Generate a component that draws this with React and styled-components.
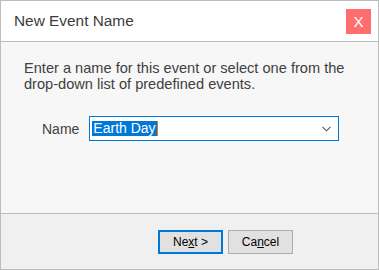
import styled, { createGlobalStyle } from 'styled-components';

const GlobalStyle = createGlobalStyle`
    html, body {
        margin: 0;
        padding: 0;
        background: #ffffff;
    }
    body {
        font-family: "Liberation Sans", Arial, sans-serif;
    }
`;

const App = () => {
    return (
        <>
            <GlobalStyle />
            <Styled.Dialog>
                <Styled.Header>
                    <Styled.Title>New Event Name</Styled.Title>
                    <Styled.CloseButton>X</Styled.CloseButton>
                </Styled.Header>
                <Styled.Body>
                    <Styled.Message>
                        Enter a name for this event or select one from the
                        <br />
                        drop-down list of predefined events.
                    </Styled.Message>
                    <Styled.FieldRow>
                        <Styled.Label>Name</Styled.Label>
                        <Styled.Combo>
                            <Styled.Selected>Earth Day</Styled.Selected>
                            <Styled.Caret />
                            <Styled.Chevron width="9" height="6" viewBox="0 0 9 6">
                                <path
                                    d="M0.5 0.8 L4.5 4.8 L8.5 0.8"
                                    fill="none"
                                    stroke="#555"
                                    strokeWidth="1.1"
                                />
                            </Styled.Chevron>
                        </Styled.Combo>
                    </Styled.FieldRow>
                </Styled.Body>
                <Styled.Footer>
                    <Styled.Button $primary>
                        Ne<u>x</u>t &gt;
                    </Styled.Button>
                    <Styled.Button>
                        Ca<u>n</u>cel
                    </Styled.Button>
                </Styled.Footer>
            </Styled.Dialog>
        </>
    );
};
export default App;

const Dialog = styled.div`
    width: 379px;
    height: 270px;
    box-sizing: border-box;
    border: 1px solid #bdbdbd;
    display: flex;
    flex-direction: column;
    background-color: #f7f7f7;
`;

const Header = styled.div`
    height: 40px;
    flex-shrink: 0;
    display: flex;
    align-items: center;
    justify-content: space-between;
    padding: 0 7px 0 13px;
    background-color: #ffffff;
    border-bottom: 1px solid #bdbdbd;
`;

const Title = styled.span`
    font-size: 15.4px;
    color: #3c3c3c;
`;

const CloseButton = styled.div`
    width: 25px;
    height: 25px;
    background-color: #ff6e6e;
    color: #ffffff;
    font-size: 15px;
    display: flex;
    align-items: center;
    justify-content: center;
`;

const Body = styled.div`
    flex: 1;
    padding: 18px 0 0 23px;
    display: flex;
    flex-direction: column;
    gap: 24px;
`;

const Message = styled.p`
    margin: 0;
    font-size: 14.6px;
    line-height: 16px;
    color: #404040;
`;

const FieldRow = styled.div`
    display: flex;
    align-items: center;
    padding-left: 18px;
    gap: 10px;
`;

const Label = styled.span`
    font-size: 14px;
    color: #404040;
`;

const Combo = styled.div`
    position: relative;
    width: 250px;
    height: 25px;
    box-sizing: border-box;
    border: 1px solid #0078d7;
    background-color: #ffffff;
    display: flex;
    align-items: center;
    padding-left: 2px;
`;

const Selected = styled.span`
    font-size: 14px;
    line-height: 15px;
    padding: 0 1px;
    background-color: #0078d7;
    color: #ffffff;
`;

const Caret = styled.span`
    width: 1px;
    height: 15px;
    background-color: #e0801c;
`;

const Chevron = styled.svg`
    position: absolute;
    right: 7px;
    top: 9px;
`;

const Footer = styled.div`
    height: 56px;
    flex-shrink: 0;
    box-sizing: border-box;
    border-top: 1px solid #bdbdbd;
    background-color: #f0f0f0;
    display: flex;
    justify-content: flex-end;
    align-items: flex-start;
    gap: 5px;
    padding: 16px 85px 0 0;
`;

const Button = styled.div`
    width: 65px;
    height: 24px;
    box-sizing: border-box;
    border: ${({ $primary }) => ($primary ? '2px solid #0078d7' : '1px solid #adadad')};
    background-color: #e1e1e1;
    font-size: 12px;
    color: #000000;
    display: flex;
    align-items: center;
    justify-content: center;
`;

const Styled = {
    Dialog,
    Header,
    Title,
    CloseButton,
    Body,
    Message,
    FieldRow,
    Label,
    Combo,
    Selected,
    Caret,
    Chevron,
    Footer,
    Button,
};
